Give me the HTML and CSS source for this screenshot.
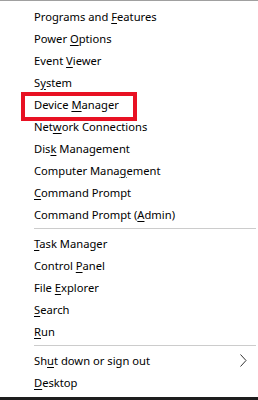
FILE: index.html
```html
<!DOCTYPE html>
<html lang="en">
<head>
    <meta charset="UTF-8" />
    <title>Quick Link Menu</title>
    <link rel="stylesheet" href="styles.css">
</head>
<body>
    <div id="menu">
        <div class="item"><span>Programs and <u>F</u>eatures</span></div>
        <div class="item"><span>Power <u>O</u>ptions</span></div>
        <div class="item"><span>Event <u>V</u>iewer</span></div>
        <div class="item"><span>S<u>y</u>stem</span></div>
        <div class="item marked"><span>Device <u>M</u>anager</span></div>
        <div class="item"><span>Net<u>w</u>ork Connections</span></div>
        <div class="item"><span>Dis<u>k</u> Management</span></div>
        <div class="item"><span>Computer Mana<u>g</u>ement</span></div>
        <div class="item"><span><u>C</u>ommand Prompt</span></div>
        <div class="item"><span>Command Prompt (<u>A</u>dmin)</span></div>
        <hr />
        <div class="item"><span><u>T</u>ask Manager</span></div>
        <div class="item"><span>Control <u>P</u>anel</span></div>
        <div class="item"><span>File <u>E</u>xplorer</span></div>
        <div class="item"><span><u>S</u>earch</span></div>
        <div class="item"><span><u>R</u>un</span></div>
        <hr />
        <div class="item">
            <span>Sh<u>u</u>t down or sign out</span>
            <svg class="chevron" width="7" height="13" viewBox="0 0 7 13">
                <polyline points="0.5,0.5 6,6.5 0.5,12.5" fill="none" stroke="#333" stroke-width="1" />
            </svg>
        </div>
        <div class="item"><span><u>D</u>esktop</span></div>
    </div>
</body>
</html>
```

FILE: styles.css
```css
body {
    margin: 0;
    padding: 0;
    background: white;
}

#menu {
    box-sizing: border-box;
    width: 258px;
    height: 400px;
    padding-top: 4px;
    border-top: 1px solid #a0a0a0;
    border-bottom: 3px solid #1e1e1e;
    font-family: "Noto Sans", "Open Sans", sans-serif;
    font-size: 11.2px;
    color: #000;
}

.item {
    display: flex;
    align-items: center;
    justify-content: space-between;
    height: 22px;
    padding-left: 34px;
    padding-right: 11px;
    position: relative;
}

.item u {
    text-underline-offset: 2px;
}

.marked::after {
    content: "";
    position: absolute;
    left: 21px;
    top: -1px;
    width: 116px;
    height: 29px;
    box-sizing: border-box;
    border: 4px solid #e81123;
}

.chevron {
    display: block;
}

hr {
    border: none;
    border-top: 1px solid #cccccc;
    margin: 3px 2px 3px 34px;
}
```
